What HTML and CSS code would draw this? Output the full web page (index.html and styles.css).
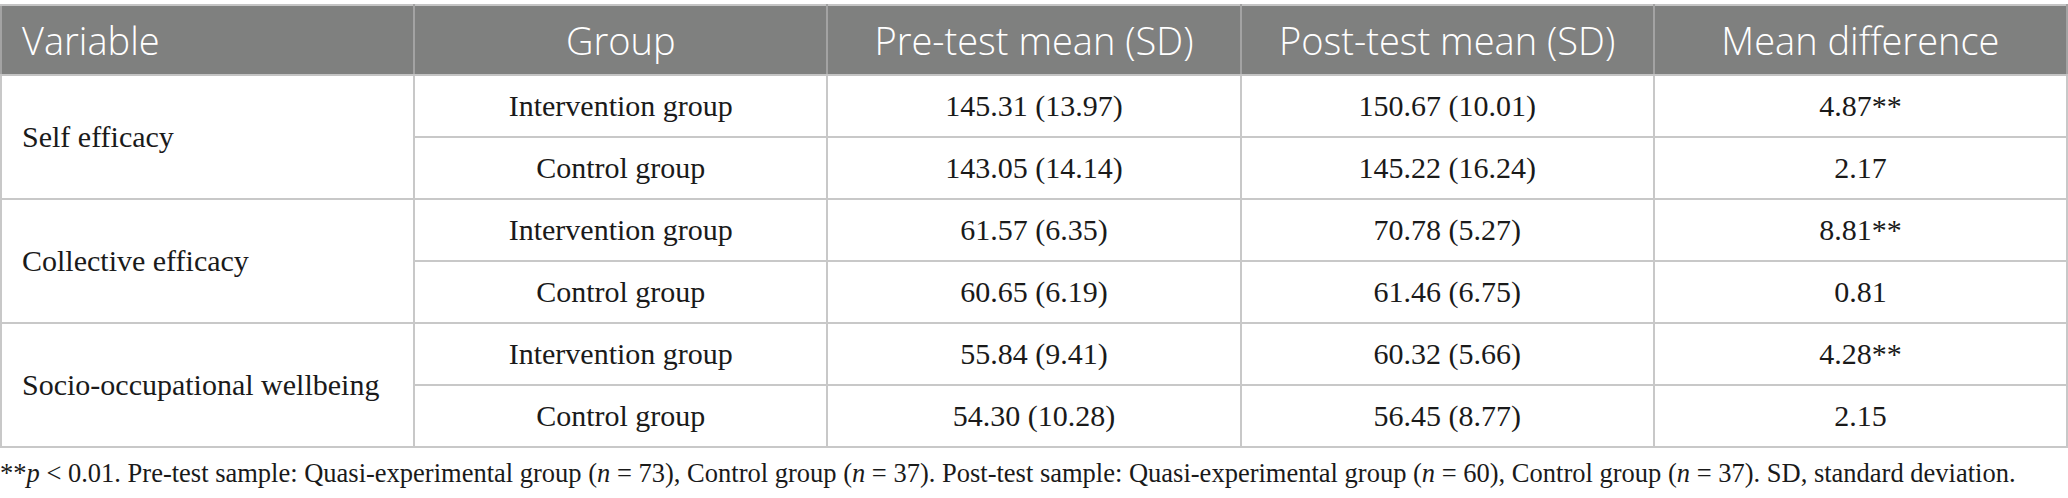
FILE: index.html
```html
<!DOCTYPE html>
<html>
<head>
<meta charset="utf-8">
<link rel="stylesheet" href="styles.css">
</head>
<body>
<div class="wrap">
<table class="data">
  <colgroup><col class="c"><col class="c"><col class="c"><col class="c"><col class="c"></colgroup>
  <thead>
    <tr>
      <th class="left">Variable</th>
      <th>Group</th>
      <th>Pre-test mean (SD)</th>
      <th>Post-test mean (SD)</th>
      <th>Mean difference</th>
    </tr>
  </thead>
  <tbody>
    <tr>
      <td class="var" rowspan="2">Self efficacy</td>
      <td>Intervention group</td>
      <td>145.31 (13.97)</td>
      <td>150.67 (10.01)</td>
      <td>4.87**</td>
    </tr>
    <tr>
      <td>Control group</td>
      <td>143.05 (14.14)</td>
      <td>145.22 (16.24)</td>
      <td>2.17</td>
    </tr>
    <tr>
      <td class="var" rowspan="2">Collective efficacy</td>
      <td>Intervention group</td>
      <td>61.57 (6.35)</td>
      <td>70.78 (5.27)</td>
      <td>8.81**</td>
    </tr>
    <tr>
      <td>Control group</td>
      <td>60.65 (6.19)</td>
      <td>61.46 (6.75)</td>
      <td>0.81</td>
    </tr>
    <tr>
      <td class="var" rowspan="2">Socio-occupational wellbeing</td>
      <td>Intervention group</td>
      <td>55.84 (9.41)</td>
      <td>60.32 (5.66)</td>
      <td>4.28**</td>
    </tr>
    <tr>
      <td>Control group</td>
      <td>54.30 (10.28)</td>
      <td>56.45 (8.77)</td>
      <td>2.15</td>
    </tr>
  </tbody>
</table>
<p class="note">**<i>p</i> &lt; 0.01. Pre-test sample: Quasi-experimental group (<i>n</i> = 73), Control group (<i>n</i> = 37). Post-test sample: Quasi-experimental group (<i>n</i> = 60), Control group (<i>n</i> = 37). SD, standard deviation.</p>
</div>
</body>
</html>
```

FILE: styles.css
```css
html, body {
  margin: 0;
  padding: 0;
  background: #ffffff;
}
.wrap {
  padding-top: 4px;
}
.data {
  width: 2068px;
  border-collapse: collapse;
  table-layout: fixed;
}
.data .c {
  width: 20%;
}
.data th {
  background: #7f807f;
  color: #ffffff;
  font-family: "Open Sans", sans-serif;
  font-weight: 300;
  font-size: 38px;
  height: 70px;
  padding: 0 20px;
  text-align: center;
  border: 2px solid #a3a3a3;
  border-top-color: #c4c4c4;
  border-bottom-color: #c4c4c4;
  box-sizing: border-box;
}
.data th.left {
  text-align: left;
}
.data td {
  font-family: "Liberation Serif", "Times New Roman", serif;
  font-size: 30px;
  color: #1a1a1a;
  height: 62px;
  padding: 0 20px;
  text-align: center;
  border: 2px solid #c8c8c8;
  box-sizing: border-box;
}
.data td.var {
  text-align: left;
}
.note {
  margin: 10px 0 0 0;
  font-family: "Liberation Serif", "Times New Roman", serif;
  font-size: 26.5px;
  color: #1a1a1a;
  white-space: nowrap;
}
```
